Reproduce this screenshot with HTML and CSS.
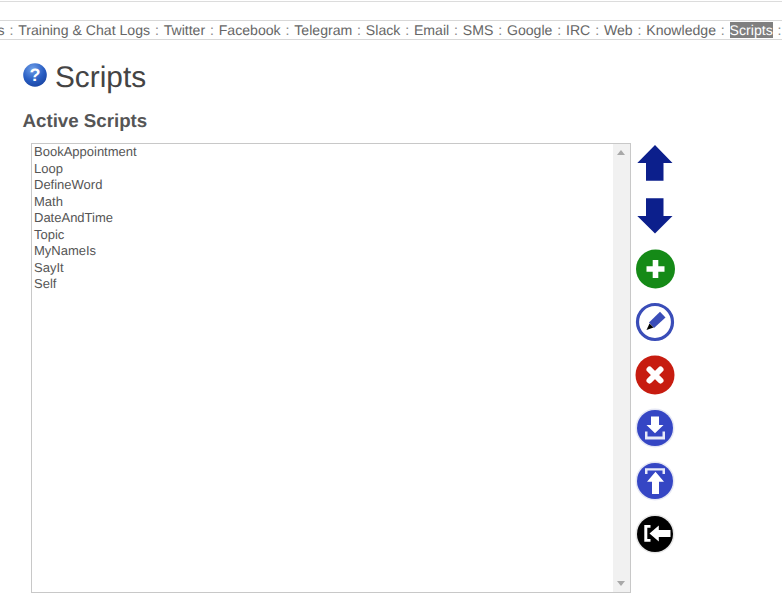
FILE: index.html
```html
<!DOCTYPE html>
<html lang="en">
<head>
<meta charset="utf-8">
<title>Scripts</title>
<link rel="stylesheet" href="styles.css">
</head>
<body>
<div class="topline"></div>
<nav class="nav">
<span class="clipped">s</span><i>:</i><span>Training &amp; Chat Logs</span><i>:</i><span>Twitter</span><i>:</i><span>Facebook</span><i>:</i><span>Telegram</span><i>:</i><span>Slack</span><i>:</i><span>Email</span><i>:</i><span>SMS</span><i>:</i><span>Google</span><i>:</i><span>IRC</span><i>:</i><span>Web</span><i>:</i><span>Knowledge</span><i>:</i><span class="current">Scripts</span><i>:</i>
</nav>
<main class="content">
<h1 class="title">
<svg class="help" viewBox="0 0 24 24" width="24" height="24">
<defs><radialGradient id="hg" cx="0.4" cy="0.25" r="0.85"><stop offset="0" stop-color="#6f9fe8"/><stop offset="0.55" stop-color="#2a5fc4"/><stop offset="1" stop-color="#163f9c"/></radialGradient></defs>
<circle cx="12" cy="12" r="11.800" fill="url(#hg)"/>
<text x="12" y="18.200" text-anchor="middle" class="qmark">?</text>
</svg>
<span>Scripts</span>
</h1>
<h2 class="subtitle">Active Scripts</h2>
<div class="workspace">
<div class="listbox">
<ul class="items">
<li>BookAppointment</li><li>Loop</li><li>DefineWord</li><li>Math</li><li>DateAndTime</li><li>Topic</li><li>MyNameIs</li><li>SayIt</li><li>Self</li>
</ul>
<div class="scrollbar"><b class="up"></b><b class="down"></b></div>
</div>
<div class="tools">
<svg class="tool" viewBox="0 0 40 40"><path d="M20 2 37.500 20H28.500V37.700H11V20H2.300Z" fill="#0c1f8c"/></svg>
<svg class="tool" viewBox="0 0 40 40"><path d="M20 37.500 37.500 20H28.500V2.300H11V20H2.300Z" fill="#0c1f8c"/></svg>
<svg class="tool" viewBox="0 0 40 40"><circle cx="20.500" cy="20" r="19.500" fill="#158a17"/><path d="M17.700 11h5.600v6.200h6.200v5.600h-6.200V29h-5.600v-6.200h-6.200v-5.600h6.200Z" fill="#fff"/></svg>
<svg class="tool" viewBox="0 0 40 40"><circle cx="20" cy="20" r="17.500" fill="#fff" stroke="#3a4db8" stroke-width="3.200"/><path d="M25 9.700 30.500 15.500 19 26 14 20.500Z" fill="#3a4db8"/><path d="M14.500 21.500 18.500 25.500 11.500 28Z" fill="#000"/></svg>
<svg class="tool" viewBox="0 0 40 40"><circle cx="20" cy="20" r="19.500" fill="#c71c10"/><path d="M14.500 14.500 25.500 25.500M25.500 14.500 14.500 25.500" stroke="#fff" stroke-width="6" stroke-linecap="round"/></svg>
<svg class="tool" viewBox="0 0 40 40"><circle cx="20" cy="20" r="19.500" fill="#e4e6f4"/><circle cx="20" cy="20" r="18" fill="#3546c4"/><path d="M16 8.500h8v8.500h4.500l-8.500 8.300-8.500-8.300H16Z" fill="#fff"/><path d="M10 23.500h2.500v5h15v-5H30v8H10Z" fill="#e8eaf8"/></svg>
<svg class="tool" viewBox="0 0 40 40"><circle cx="20" cy="20" r="19.500" fill="#e4e6f4"/><circle cx="20" cy="20" r="18" fill="#3546c4"/><path d="M10 13h2.500V9.500h15V13H30V7.300H10Z" fill="#e8eaf8"/><path d="M17 33V20.700h-5l8.500-10 8.500 10h-5V33Z" fill="#fff"/></svg>
<svg class="tool" viewBox="0 0 40 40"><circle cx="20" cy="20" r="19.500" fill="#e6e6e6"/><circle cx="20" cy="20" r="18" fill="#000"/><path d="M15.500 11H9.300V27.700H15.500V25H12.300V13.700H15.500Z" fill="#fff"/><path d="M14.500 19.500 23.800 11.500V16H35.500V23H23.800V27.500Z" fill="#fff"/></svg>
</div>
</div>
</main>
</body>
</html>
```
FILE: styles.css
```css
html, body {
  margin: 0;
  padding: 0;
  background: #fff;
}
body {
  width: 782px;
  height: 612px;
  overflow: hidden;
  font-family: "Liberation Sans", Arial, sans-serif;
  color: #555;
  text-rendering: geometricPrecision;
}
.topline {
  height: 1px;
  margin-top: 1px;
  background: #dcdcdc;
}
.nav {
  display: flex;
  align-items: center;
  height: 18px;
  margin-top: 18px;
  border-top: 1px solid #d8d8d8;
  border-bottom: 1px solid #d8d8d8;
  font-size: 14.100px;
  line-height: 16px;
  white-space: nowrap;
  overflow: hidden;
  color: #666;
}
.nav i {
  font-style: normal;
  margin: 0 4.850px;
  color: #888;
}
.clipped {
  margin-left: -2.500px;
}
.current {
  background: #7f7f7f;
  color: #fff;
}
.content {
  padding: 20px 0 0 23px;
}
.title {
  display: flex;
  align-items: center;
  gap: 8px;
  margin: 0;
  height: 36px;
  font-size: 29.800px;
  font-weight: 400;
  color: #444;
}
.help {
  margin-bottom: 6px;
}
.qmark {
  font-family: "Liberation Sans", Arial, sans-serif;
  font-size: 18px;
  font-weight: 700;
  fill: #fff;
}
.subtitle {
  margin: 14px 0 0 -0.500px;
  height: 22px;
  font-size: 18.720px;
  line-height: 22px;
  font-weight: 700;
  color: #555;
}
.workspace {
  display: flex;
  gap: 4px;
  margin: 11px 0 0 8px;
}
.listbox {
  display: flex;
  box-sizing: border-box;
  width: 600px;
  height: 450px;
  border: 1px solid #c8c8c8;
}
.items {
  flex: 1;
  margin: 0;
  padding: 0 2px;
  list-style: none;
  font-size: 13px;
  line-height: 16.500px;
  color: #555;
}
.scrollbar {
  position: relative;
  width: 17px;
  background: #f1f1f1;
}
.up, .down {
  position: absolute;
  left: 4px;
  width: 0;
  height: 0;
  border-left: 4px solid transparent;
  border-right: 4px solid transparent;
}
.up {
  top: 6px;
  border-bottom: 5px solid #a8a8a8;
}
.down {
  bottom: 6px;
  border-top: 5px solid #a8a8a8;
}
.tools {
  display: flex;
  flex-direction: column;
  gap: 13px;
}
.tool {
  display: block;
  width: 40px;
  height: 40px;
}
```
